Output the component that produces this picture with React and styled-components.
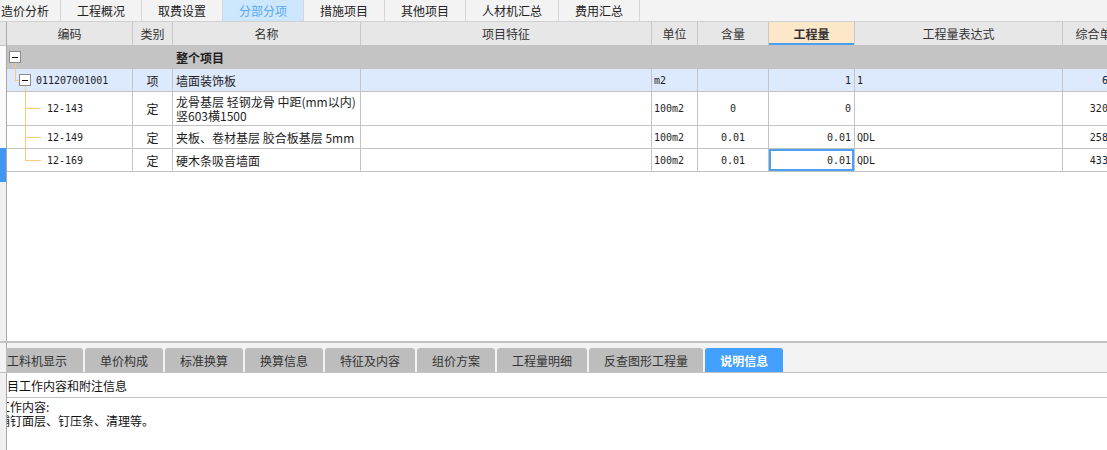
import styled, { createGlobalStyle } from "styled-components";

const GlobalStyle = createGlobalStyle`
  html, body {
    margin: 0;
    padding: 0;
    background: #fff;
  }
  body {
    font-family: "Noto Sans CJK SC", "Microsoft YaHei", sans-serif;
    font-size: 12px;
    color: #222;
  }
`;

const COLS = "126px 40px 188px 291px 46px 71px 86px 208px 74px";
const LINE = "#c3c3c3";
const BLUE = "#4a9ff5";
const TREE = "#fbc97a";

const topTabs = [
  { label: "造价分析", first: true },
  { label: "工程概况" },
  { label: "取费设置" },
  { label: "分部分项", active: true },
  { label: "措施项目" },
  { label: "其他项目" },
  { label: "人材机汇总" },
  { label: "费用汇总" },
];

const bottomTabs = [
  { label: "工料机显示", first: true },
  { label: "单价构成" },
  { label: "标准换算" },
  { label: "换算信息" },
  { label: "特征及内容" },
  { label: "组价方案" },
  { label: "工程量明细" },
  { label: "反查图形工程量" },
  { label: "说明信息", active: true },
];

const headers = [
  "编码",
  "类别",
  "名称",
  "项目特征",
  "单位",
  "含量",
  "工程量",
  "工程量表达式",
  "综合单价",
];

const rows = [
  {
    id: "root",
    h: 23,
    bg: "#c4c4c4",
    tree: "root",
    type: "",
    name: "整个项目",
    bold: true,
  },
  {
    id: "item",
    h: 23,
    bg: "#dde9fc",
    tree: "item",
    code: "011207001001",
    type: "项",
    name: "墙面装饰板",
    unit: "m2",
    ratio: "",
    qty: "1",
    expr: "1",
    price: "69.14",
  },
  {
    id: "q1",
    h: 34,
    tree: "child",
    code: "12-143",
    type: "定",
    name: ["龙骨基层 轻钢龙骨 中距(mm以内)", "竖603横1500"],
    unit: "100m2",
    ratio: "0",
    qty: "0",
    expr: "",
    price: "3204.29",
  },
  {
    id: "q2",
    h: 23,
    tree: "child",
    code: "12-149",
    type: "定",
    name: "夹板、卷材基层 胶合板基层 5mm",
    unit: "100m2",
    ratio: "0.01",
    qty: "0.01",
    expr: "QDL",
    price: "2580.66",
  },
  {
    id: "q3",
    h: 23,
    tree: "last",
    code: "12-169",
    type: "定",
    name: "硬木条吸音墙面",
    unit: "100m2",
    ratio: "0.01",
    qty: "0.01",
    expr: "QDL",
    price: "4330.77",
    selected: true,
  },
];

const MinusBox = ({ x }) => (
  <>
    <rect x={x + 0.5} y={5.5} width={11} height={11} fill="#fff" stroke="#8a8a8a" />
    <rect x={x + 3} y={11} width={6} height={1} fill="#111" />
  </>
);

const TreeMark = ({ kind, h }) => {
  const c = h - 1;
  const mid = Math.floor(c / 2) + 0.5;
  if (kind === "root") {
    return (
      <TreeSvg width={40} height={c}>
        <line x1={8.5} y1={17} x2={8.5} y2={c} stroke={TREE} />
        <MinusBox x={2} />
      </TreeSvg>
    );
  }
  if (kind === "item") {
    return (
      <TreeSvg width={29} height={c}>
        <line x1={8.5} y1={0} x2={8.5} y2={11.5} stroke={TREE} />
        <line x1={8} y1={11.5} x2={12} y2={11.5} stroke={TREE} />
        <line x1={18.5} y1={17} x2={18.5} y2={c} stroke={TREE} />
        <MinusBox x={12} />
      </TreeSvg>
    );
  }
  return (
    <TreeSvg width={40} height={c}>
      <line x1={18.5} y1={0} x2={18.5} y2={kind === "last" ? mid : c} stroke={TREE} />
      <line x1={18} y1={mid} x2={34} y2={mid} stroke={TREE} />
    </TreeSvg>
  );
};

export default function App() {
  return (
    <>
      <GlobalStyle />
      <Page>
        <TopBar>
          {topTabs.map((t) => (
            <TopTab key={t.label} $active={t.active} $first={t.first}>
              {t.label}
            </TopTab>
          ))}
        </TopBar>

        <Body>
          <Gutter>
            <GutterHead />
            <GutterBlank />
            <GutterThumb />
            <GutterRest />
          </Gutter>
          <GridArea>
            <HeadRow>
              {headers.map((h) => (
                <HeadCell key={h} $hot={h === "工程量"}>
                  {h}
                </HeadCell>
              ))}
            </HeadRow>
            {rows.map((r) => (
              <Row key={r.id} $h={r.h} $bg={r.bg}>
                <CodeCell>
                  <TreeMark kind={r.tree} h={r.h} />
                  {r.code && <Mono>{r.code}</Mono>}
                </CodeCell>
                <Cell $align="center">{r.type}</Cell>
                <Cell $bold={r.bold} $pad="0 3px">
                  {Array.isArray(r.name) ? (
                    <Lines>
                      {r.name.map((n) => (
                        <div key={n}>{n}</div>
                      ))}
                    </Lines>
                  ) : (
                    r.name
                  )}
                </Cell>
                <Cell />
                <Cell $pad="0 2px">
                  <Mono>{r.unit}</Mono>
                </Cell>
                <Cell $align="center">
                  <Mono>{r.ratio}</Mono>
                </Cell>
                <Cell $align="flex-end" $pad="0 3px" $selected={r.selected}>
                  <Mono>{r.qty}</Mono>
                </Cell>
                <Cell $pad="0 2px">
                  <Mono>{r.expr}</Mono>
                </Cell>
                <Cell $align="flex-end" $pad="0 4px">
                  <Mono>{r.price}</Mono>
                </Cell>
              </Row>
            ))}
          </GridArea>
        </Body>

        <BottomBar>
          <BarGutter />
          <BottomTabs>
            {bottomTabs.map((t) => (
              <BottomTab key={t.label} $active={t.active} $first={t.first}>
                {t.label}
              </BottomTab>
            ))}
          </BottomTabs>
        </BottomBar>

        <InfoPanel>
          <InfoGutter />
          <InfoMain>
            <InfoTitle>项目工作内容和附注信息</InfoTitle>
            <InfoText>
              <div>工作内容:</div>
              <div>铺钉面层、钉压条、清理等。</div>
            </InfoText>
          </InfoMain>
        </InfoPanel>
      </Page>
    </>
  );
}

const Page = styled.div`
  width: 1107px;
  height: 450px;
  overflow: hidden;
  display: flex;
  flex-direction: column;
  background: #fff;
`;

const TopBar = styled.div`
  height: 22px;
  box-sizing: border-box;
  display: flex;
  background: #f3f3f3;
  border-bottom: 1px solid #d0d0d0;
  margin-left: -10px;
`;

const TopTab = styled.div`
  display: flex;
  align-items: center;
  justify-content: center;
  padding: ${({ $first }) => ($first ? "0 11px 0 11px" : "0 16px")};
  border-right: 1px solid #d6d6d6;
  background: ${({ $active }) => ($active ? "#cde7ff" : "transparent")};
  color: ${({ $active }) => ($active ? "#5aa8f0" : "#222")};
  font-size: 12px;
  white-space: nowrap;
`;

const Body = styled.div`
  height: 321px;
  box-sizing: border-box;
  display: flex;
  border-bottom: 2px solid #c2c2c2;
`;

const Gutter = styled.div`
  width: 7px;
  flex: none;
  box-sizing: border-box;
  display: flex;
  flex-direction: column;
  border-right: 1px solid #a9a9a9;
`;

const GutterHead = styled.div`
  height: 24px;
  box-sizing: border-box;
  background: #e6e6e6;
  border-bottom: 1px solid ${LINE};
`;

const GutterBlank = styled.div`
  height: 102px;
  background: #fafafa;
`;

const GutterThumb = styled.div`
  height: 34px;
  background: #3f96f3;
`;

const GutterRest = styled.div`
  flex: 1;
  background: #f0f0f0;
`;

const GridArea = styled.div`
  flex: 1;
  overflow: hidden;
  background: #fff;
`;

const HeadRow = styled.div`
  display: grid;
  grid-template-columns: ${COLS};
  height: 24px;
  box-sizing: border-box;
  background: #e7e7e7;
  border-bottom: 1px solid ${LINE};
`;

const HeadCell = styled.div`
  display: flex;
  align-items: center;
  justify-content: center;
  border-right: 1px solid #c8c8c8;
  background: ${({ $hot }) => ($hot ? "#fde7c9" : "transparent")};
  box-shadow: ${({ $hot }) => ($hot ? `inset 0 -2px 0 ${BLUE}` : "none")};
  font-weight: ${({ $hot }) => ($hot ? 700 : 400)};
  color: #333;
  white-space: nowrap;
  overflow: hidden;
`;

const Row = styled.div`
  display: grid;
  grid-template-columns: ${COLS};
  height: ${({ $h }) => $h}px;
  box-sizing: border-box;
  background: ${({ $bg }) => $bg || "#fff"};
  border-bottom: 1px solid ${LINE};
`;

const Cell = styled.div`
  display: flex;
  align-items: center;
  justify-content: ${({ $align }) => $align || "flex-start"};
  padding: ${({ $pad }) => $pad || "0"};
  border-right: 1px solid ${LINE};
  box-shadow: ${({ $selected }) => ($selected ? `inset 0 0 0 2px ${BLUE}` : "none")};
  font-weight: ${({ $bold }) => ($bold ? 700 : 400)};
  white-space: nowrap;
  overflow: hidden;
  color: #1e1e1e;
`;

const CodeCell = styled(Cell)`
  align-items: stretch;
`;

const TreeSvg = styled.svg`
  flex: none;
  display: block;
`;

const Mono = styled.span`
  display: flex;
  align-items: center;
  font-family: "DejaVu Sans Mono", "Liberation Mono", monospace;
  font-size: 10px;
  color: #1e1e1e;
`;

const Lines = styled.div`
  line-height: 14px;
`;

const BottomBar = styled.div`
  height: 30px;
  box-sizing: border-box;
  display: flex;
  background: #f3f3f3;
  border-bottom: 1px solid #c2c2c2;
`;

const BarGutter = styled.div`
  width: 7px;
  flex: none;
  box-sizing: border-box;
  border-right: 1px solid #a9a9a9;
`;

const BottomTabs = styled.div`
  display: flex;
  align-items: flex-end;
  gap: 2px;
  margin-left: -1px;
`;

const BottomTab = styled.div`
  height: 24px;
  display: flex;
  align-items: center;
  padding: ${({ $first }) => ($first ? "0 16px 0 1px" : "0 15px")};
  border-radius: 3px 3px 0 0;
  background: ${({ $active }) => ($active ? "#43a0ff" : "#bdbdbd")};
  color: ${({ $active }) => ($active ? "#fff" : "#333")};
  font-weight: ${({ $active }) => ($active ? 700 : 400)};
  white-space: nowrap;
`;

const InfoPanel = styled.div`
  flex: 1;
  display: flex;
`;

const InfoGutter = styled.div`
  width: 7px;
  flex: none;
  box-sizing: border-box;
  background: #f0f0f0;
  border-right: 1px solid #a9a9a9;
`;

const InfoMain = styled.div`
  flex: 1;
  overflow: hidden;
  display: flex;
  flex-direction: column;
`;

const InfoTitle = styled.div`
  height: 25px;
  box-sizing: border-box;
  display: flex;
  align-items: center;
  margin-left: -12px;
  border-bottom: 1px solid #c2c2c2;
  color: #111;
  white-space: nowrap;
`;

const InfoText = styled.div`
  padding-top: 2px;
  margin-left: -9px;
  line-height: 14px;
  color: #111;
  white-space: nowrap;
`;
